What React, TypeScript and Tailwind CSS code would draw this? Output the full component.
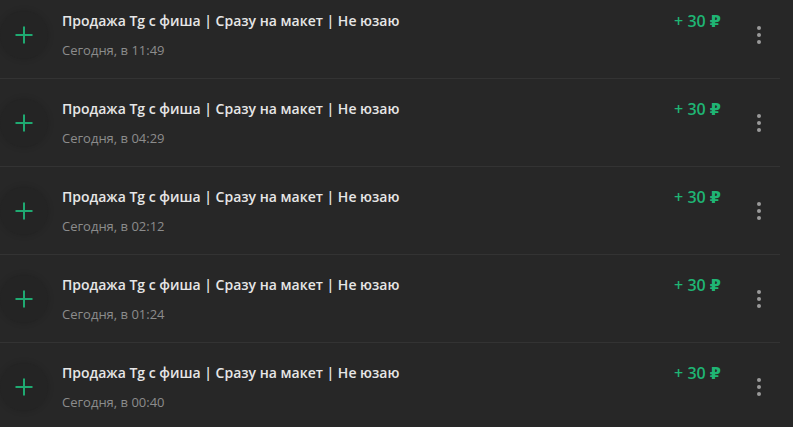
import React from "react";

const rows = ["11:49", "04:29", "02:12", "01:24", "00:40"];

function Plus() {
  return (
    <svg width="20" height="20" viewBox="0 0 20 20" fill="none">
      <path d="M10 1.5v17M1.5 10h17" stroke="#1fa971" strokeWidth="2" />
    </svg>
  );
}

export default function App() {
  return (
    <div
      className="w-[793px] h-[427px] overflow-hidden bg-[#272727]"
      style={{ fontFamily: '"Open Sans", "DejaVu Sans", sans-serif' }}
    >
      <div className="-mt-[9px] pr-[13px]">
        {rows.map((t, i) => (
          <div
            key={t}
            className={
              i < rows.length - 1
                ? "flex items-stretch h-[88px] border-b border-[#333333]"
                : "flex items-stretch h-[88px]"
            }
          >
            <div className="flex items-center">
              <div className="w-12 h-12 rounded-full bg-[#242424] shadow-[0_0_6px_rgba(0,0,0,0.15)] flex items-center justify-center">
                <Plus />
              </div>
            </div>
            <div className="flex-1 pl-[14px] pt-[20px]">
              <div className="text-[14px] leading-5 font-semibold text-[#e6e6e6]">
                Продажа Tg с фиша | Сразу на макет | Не юзаю
              </div>
              <div className="mt-[10px] text-[13px] leading-[18px] text-[#8c8c8c]">
                Сегодня, в {t}
              </div>
            </div>
            <div className="pt-[19px] mr-[17px] text-[16px] leading-[22px] font-semibold text-[#1fb574]">
              + 30 ₽
            </div>
            <div className="w-[42px] flex items-center justify-center pt-[0px]">
              <div className="flex flex-col gap-[3px]">
                <span className="block w-1 h-1 rounded-full bg-[#9a9a9a]" />
                <span className="block w-1 h-1 rounded-full bg-[#9a9a9a]" />
                <span className="block w-1 h-1 rounded-full bg-[#9a9a9a]" />
              </div>
            </div>
          </div>
        ))}
      </div>
    </div>
  );
}
